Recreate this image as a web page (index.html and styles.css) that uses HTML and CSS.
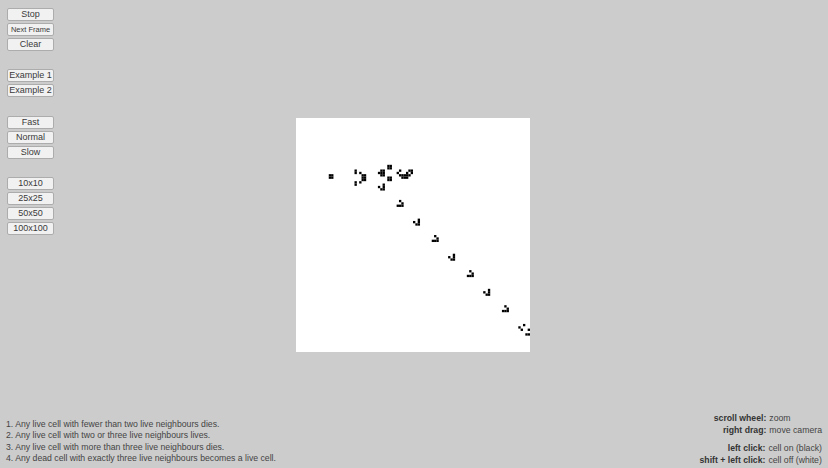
FILE: index.html
```html
<!DOCTYPE html>
<html>
<head>
<meta charset="utf-8">
<link rel="stylesheet" href="styles.css">
</head>
<body>
<div class="app">
  <div class="sidebar">
    <div class="group">
      <button class="btn">Stop</button>
      <button class="btn small">Next Frame</button>
      <button class="btn">Clear</button>
    </div>
    <div class="group">
      <button class="btn">Example 1</button>
      <button class="btn">Example 2</button>
    </div>
    <div class="group">
      <button class="btn">Fast</button>
      <button class="btn">Normal</button>
      <button class="btn">Slow</button>
    </div>
    <div class="group">
      <button class="btn">10x10</button>
      <button class="btn">25x25</button>
      <button class="btn">50x50</button>
      <button class="btn">100x100</button>
    </div>
  </div>
  <canvas id="board" class="board" width="234" height="234"></canvas>
  <ol class="rules">
    <li>1. Any live cell with fewer than two live neighbours dies.</li>
    <li>2. Any live cell with two or three live neighbours lives.</li>
    <li>3. Any live cell with more than three live neighbours dies.</li>
    <li>4. Any dead cell with exactly three live neighbours becomes a live cell.</li>
  </ol>
  <div class="help">
    <dl class="keys">
      <dt>scroll wheel:</dt><dd>zoom</dd>
      <dt>right drag:</dt><dd>move camera</dd>
    </dl>
    <dl class="keys">
      <dt>left click:</dt><dd>cell on (black)</dd>
      <dt>shift + left click:</dt><dd>cell off (white)</dd>
    </dl>
  </div>
</div>
<script src="life.js"></script>
</body>
</html>
```

FILE: styles.css
```css
html, body {
  margin: 0;
  padding: 0;
}
body {
  background: #cccccc;
  font-family: "Liberation Sans", Arial, sans-serif;
  color: #3c3c3c;
  width: 828px;
  height: 468px;
  overflow: hidden;
}
.app {
  width: 828px;
  height: 468px;
  display: grid;
  grid-template-columns: 296px 234px 1fr;
  grid-template-rows: 118px 234px 1fr;
}
.sidebar {
  grid-column: 1;
  grid-row: 1 / 3;
  padding: 8px 0 0 7px;
  display: flex;
  flex-direction: column;
  gap: 18.4px;
}
.group {
  display: flex;
  flex-direction: column;
  gap: 2px;
}
.btn {
  width: 47px;
  height: 13px;
  padding: 0;
  margin: 0;
  border: 1px solid #acacac;
  border-radius: 2px;
  background: #f1f1f1;
  font-family: "Liberation Sans", Arial, sans-serif;
  font-size: 9px;
  line-height: 11px;
  color: #3a3a3a;
  text-align: center;
}
.btn.small {
  font-size: 7.5px;
}
.board {
  grid-column: 2;
  grid-row: 2;
  width: 234px;
  height: 234px;
  background: #ffffff;
  display: block;
}
.rules {
  grid-column: 1 / 3;
  grid-row: 3;
  align-self: end;
  list-style: none;
  margin: 0 0 3px 6px;
  padding: 0;
  font-size: 8.7px;
  line-height: 11.6px;
  color: #444444;
}
.help {
  grid-column: 3;
  grid-row: 3;
  align-self: end;
  justify-self: end;
  margin: 0 6px 2px 0;
  display: flex;
  flex-direction: column;
  align-items: flex-end;
  gap: 6px;
  font-size: 8.7px;
  line-height: 12px;
  color: #444444;
}
.keys {
  margin: 0;
  display: grid;
  grid-template-columns: auto auto;
  column-gap: 3px;
}
.keys dt {
  margin: 0;
  font-weight: bold;
  color: #333333;
  text-align: right;
}
.keys dd {
  margin: 0;
  text-align: left;
}
```

FILE: life.js
```js
(function () {
  var W = 100, H = 100, GENERATIONS = 355;
  var GUN = [[0,4],[1,4],[0,5],[1,5],[10,4],[10,5],[10,6],[11,3],[11,7],[12,2],[12,8],[13,2],[13,8],[14,5],[15,3],[15,7],[16,4],[16,5],[16,6],[17,5],[20,2],[20,3],[20,4],[21,2],[21,3],[21,4],[22,1],[22,5],[24,0],[24,1],[24,5],[24,6],[34,2],[35,2],[34,3],[35,3]];

  function seed(ox, oy) {
    var g = new Uint8Array(W * H);
    GUN.forEach(function (c) { g[(oy + c[1]) * W + ox + c[0]] = 1; });
    return g;
  }

  function step(g) {
    var n = new Uint8Array(W * H);
    for (var y = 0; y < H; y++) {
      for (var x = 0; x < W; x++) {
        var c = 0;
        for (var dy = -1; dy <= 1; dy++) {
          for (var dx = -1; dx <= 1; dx++) {
            if (!dx && !dy) continue;
            var xx = x + dx, yy = y + dy;
            if (xx < 0 || yy < 0 || xx >= W || yy >= H) continue;
            c += g[yy * W + xx];
          }
        }
        var i = y * W + x;
        n[i] = (c === 3 || (c === 2 && g[i])) ? 1 : 0;
      }
    }
    return n;
  }

  var g = seed(14, 20);
  for (var k = 0; k < GENERATIONS; k++) g = step(g);

  var canvas = document.getElementById("board");
  var ctx = canvas.getContext("2d");
  var s = canvas.width / W;
  ctx.fillStyle = "#ffffff";
  ctx.fillRect(0, 0, canvas.width, canvas.height);
  ctx.fillStyle = "#000000";
  for (var y = 0; y < H; y++) {
    for (var x = 0; x < W; x++) {
      if (g[y * W + x]) ctx.fillRect(x * s, y * s, s, s);
    }
  }
})();
```
